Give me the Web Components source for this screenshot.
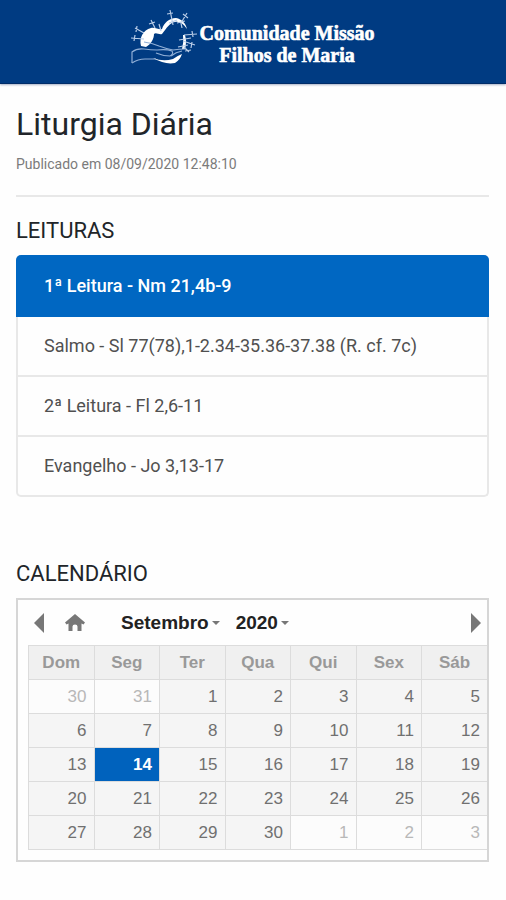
<!DOCTYPE html>
<html lang="pt-BR">
<head>
<meta charset="utf-8">
<meta name="viewport" content="width=device-width, initial-scale=1">
<title>Liturgia Diária</title>
<style>
  body {
    margin: 0;
    background: #fefefe;
    color: #212529;
    font-family: Roboto, "Liberation Sans", sans-serif;
  }
  main {
    padding: 20px 17px 0 16px;
  }
</style>
</head>
<body>
  <site-header>
    <span>Comunidade Missão</span>
    <span>Filhos de Maria</span>
  </site-header>

  <main>
    <page-title>
      Liturgia Diária
      <span slot="date">Publicado em 08/09/2020 12:48:10</span>
    </page-title>

    <page-section heading="LEITURAS">
      <reading-list>
        <reading-item active>1ª Leitura - Nm 21,4b-9</reading-item>
        <reading-item>Salmo - Sl 77(78),1-2.34-35.36-37.38 (R. cf. 7c)</reading-item>
        <reading-item>2ª Leitura - Fl 2,6-11</reading-item>
        <reading-item>Evangelho - Jo 3,13-17</reading-item>
      </reading-list>
    </page-section>

    <page-section heading="CALENDÁRIO">
      <month-calendar year="2020" month="9" day="14"></month-calendar>
    </page-section>
  </main>

<script>
class SiteHeader extends HTMLElement {
  constructor() {
    super();
    this.attachShadow({ mode: 'open' });
    this.shadowRoot.innerHTML = `
      <style>
        :host {
          display: block;
          background: #003b82;
          border-bottom: 1px solid #002c68;
          box-shadow: 0 1px 2px rgba(0, 30, 90, 0.35);
        }
        a {
          display: flex;
          align-items: center;
          justify-content: center;
          gap: 2px;
          height: 83px;
          padding-bottom: 10px;
          box-sizing: border-box;
          color: #fff;
          text-decoration: none;
        }
        .name {
          display: flex;
          flex-direction: column;
          align-items: center;
          padding-top: 14px;
          font: bold 20px/22px "Liberation Serif", serif;
          -webkit-text-stroke: 0.6px #fff;
        }
      </style>
      <a href="#">
        <svg width="66" height="56" viewBox="0 0 66 56" fill="none" stroke="#fff" aria-hidden="true">
          <!-- heart -->
          <path d="M10 37C8 29 12 21 20 19C24 18 28 21 31 20C33 14 38 9 45 9C51 10 55 15 56 20C52 14 48 12 44 13C38 14 36 19 31 25C28 26 25 23 23 25C23 30 20 35 15 38Z" fill="#fff" stroke="none"/>
          <path d="M54 26Q56 33 54 40L51 40Q53 33 52 26Z" fill="#fff" stroke="none"/>
          <!-- thorns -->
          <g stroke="#b9cde8" stroke-width="1.200">
            <path d="M13 24L4 19M6 17L5 23M13 30L0 29M4 26L3 32M24 19L20 11M18 15L24 13M30 22L28 15M42 16L39 1M36 5L42 4M38 14L46 11M51 19L50 14L56 4M52 5L57 9M46 14L54 12"/>
            <path d="M53 26L66 25M61 22L62 28M52 32L64 36M61 33L60 39M53 38L58 43M54 42L60 41M48 31L60 29M47 38L57 36"/>
          </g>
          <!-- hand -->
          <g stroke="#8faed6" stroke-width="1.200">
            <path d="M1 54V43Q6 39 13 40Q20 41 26 41Q36 40 41 42Q43 45 39 47Q32 47 25 44"/>
            <path d="M1 54Q7 50 14 50Q20 50 25 50M13 33Q21 34 28 37Q36 40 42 41Q48 40 55 40M40 47Q45 43 51 42"/>
          </g>
          <path d="M22 49Q32 53 42 50Q46 47 51 45Q49 51 44 54Q34 56 22 49Z" fill="#fff" stroke="none"/>
        </svg>
        <span class="name"><slot></slot></span>
      </a>
    `;
  }
}

class PageTitle extends HTMLElement {
  constructor() {
    super();
    this.attachShadow({ mode: 'open' });
    this.shadowRoot.innerHTML = `
      <style>
        :host {
          display: block;
          padding-bottom: 21px;
          border-bottom: 2px solid #e8e8e8;
        }
        h1 {
          margin: 0 0 10px;
          font-size: 32px;
          line-height: 40px;
          font-weight: 400;
        }
        p {
          margin: 0;
          font-size: 14px;
          line-height: 20px;
          color: #7b7b7b;
        }
      </style>
      <h1><slot></slot></h1>
      <p><slot name="date"></slot></p>
    `;
  }
}

class PageSection extends HTMLElement {
  constructor() {
    super();
    this.attachShadow({ mode: 'open' });
  }

  connectedCallback() {
    this.shadowRoot.innerHTML = `
      <style>
        :host {
          display: block;
          padding-top: 20px;
        }
        :host(:not(:last-child)) {
          margin-bottom: 43px;
        }
        h2 {
          margin: 0 0 10px;
          font-size: 22px;
          line-height: 28px;
          font-weight: 400;
        }
      </style>
      <h2>${this.getAttribute('heading')}</h2>
      <slot></slot>
    `;
  }
}

class ReadingList extends HTMLElement {
  constructor() {
    super();
    this.attachShadow({ mode: 'open' });
    this.shadowRoot.innerHTML = `
      <style>
        :host {
          display: block;
          border: 2px solid #e8e8e8;
          border-top: 0;
          border-radius: 5px;
        }
      </style>
      <slot></slot>
    `;
  }
}

class ReadingItem extends HTMLElement {
  constructor() {
    super();
    this.attachShadow({ mode: 'open' });
    this.shadowRoot.innerHTML = `
      <style>
        :host {
          display: block;
        }
        :host(:not([active]):not(:last-child)) {
          border-bottom: 2px solid #e8e8e8;
        }
        a {
          display: block;
          padding: 17px 26px;
          font-size: 18px;
          line-height: 24px;
          color: #505050;
          text-decoration: none;
        }
        :host([active]) a {
          margin: 0 -2px;
          padding: 19px 28px;
          border-radius: 5px 5px 0 0;
          background: #0067c2;
          color: #fff;
          font-weight: 500;
        }
      </style>
      <a href="#"><slot></slot></a>
    `;
  }
}

const MONTHS = ['Janeiro', 'Fevereiro', 'Março', 'Abril', 'Maio', 'Junho', 'Julho',
  'Agosto', 'Setembro', 'Outubro', 'Novembro', 'Dezembro'];
const WEEKDAYS = ['Dom', 'Seg', 'Ter', 'Qua', 'Qui', 'Sex', 'Sáb'];

class MonthCalendar extends HTMLElement {
  constructor() {
    super();
    this.attachShadow({ mode: 'open' });
  }

  connectedCallback() {
    this.year = Number(this.getAttribute('year'));
    this.month = Number(this.getAttribute('month')) - 1;
    this.day = Number(this.getAttribute('day'));
    this.home = [this.year, this.month];
    this.render();
  }

  show(year, month) {
    const date = new Date(year, month, 1);
    this.year = date.getFullYear();
    this.month = date.getMonth();
    this.render();
  }

  renderWeeks() {
    const offset = new Date(this.year, this.month, 1).getDay();
    const total = new Date(this.year, this.month + 1, 0).getDate();
    const weeks = Math.ceil((offset + total) / 7);
    let rows = '';
    for (let w = 0; w < weeks; w++) {
      rows += '<tr>';
      for (let d = 0; d < 7; d++) {
        const date = new Date(this.year, this.month, w * 7 + d - offset + 1);
        let state = '';
        if (date.getMonth() !== this.month) {
          state = 'other';
        } else if (date.getDate() === this.day) {
          state = 'selected';
        }
        rows += `<td class="${state}"><button type="button">${date.getDate()}</button></td>`;
      }
      rows += '</tr>';
    }
    return rows;
  }

  render() {
    const months = MONTHS.map((name, i) =>
      `<option value="${i}" ${i === this.month ? 'selected' : ''}>${name}</option>`).join('');
    let years = '';
    for (let y = this.year - 2; y <= this.year + 2; y++) {
      years += `<option ${y === this.year ? 'selected' : ''}>${y}</option>`;
    }

    this.shadowRoot.innerHTML = `
      <style>
        :host {
          display: block;
          padding: 0 0 10px 10px;
          border: 2px solid #d6d6d6;
          font-family: "Liberation Sans", Arial, sans-serif;
        }
        button, select {
          margin: 0;
          padding: 0;
          border: 0;
          background: none;
          font: inherit;
          color: inherit;
          cursor: pointer;
        }
        svg {
          display: block;
          fill: #777;
        }
        nav {
          display: flex;
          align-items: center;
          height: 45px;
          padding: 0 6px;
        }
        .home {
          margin: 0 36px 0 21px;
        }
        label {
          display: flex;
          align-items: center;
          gap: 3px;
          margin-right: 16px;
        }
        select {
          appearance: none;
          field-sizing: content;
          font-size: 19px;
          line-height: 24px;
          font-weight: bold;
          color: #222;
        }
        .next {
          margin-left: auto;
        }
        table {
          width: 100%;
          table-layout: fixed;
          border-collapse: collapse;
          font-size: 17px;
          line-height: 20px;
          color: #707070;
        }
        th, td {
          height: 33px;
          padding: 0;
          border: 1px solid #dcdcdc;
          background: #f5f5f5;
        }
        th:last-child, td:last-child {
          border-right: 0;
        }
        th {
          background: #f0f0f0;
          color: #999;
        }
        td button {
          display: block;
          width: 100%;
          padding: 6px 7px;
          text-align: right;
        }
        td.other {
          background: #fcfcfc;
          color: #b8b8b8;
        }
        td.selected {
          background: #0062bd;
          color: #fff;
          font-weight: bold;
        }
      </style>
      <nav>
        <button class="prev" type="button" aria-label="Mês anterior">
          <svg width="10" height="20" viewBox="0 0 10 20"><path d="M10 0V20L0 10Z"/></svg>
        </button>
        <button class="home" type="button" aria-label="Mês atual">
          <svg width="20" height="17" viewBox="0 0 20 17"><path d="M10 0L20 8.500L18.500 10.500L16.500 9.500V17H12.500V12.500Q12.500 10.500 10 10.500Q7.500 10.500 7.500 12.500V17H3.500V9.500L1.500 10.500L0 8.500Z"/></svg>
        </button>
        <label>
          <select class="month" aria-label="Mês">${months}</select>
          <svg width="8" height="4" viewBox="0 0 8 4"><path d="M0 0H8L4 4Z"/></svg>
        </label>
        <label>
          <select class="year" aria-label="Ano">${years}</select>
          <svg width="8" height="4" viewBox="0 0 8 4"><path d="M0 0H8L4 4Z"/></svg>
        </label>
        <button class="next" type="button" aria-label="Próximo mês">
          <svg width="10" height="20" viewBox="0 0 10 20"><path d="M0 0V20L10 10Z"/></svg>
        </button>
      </nav>
      <table>
        <thead>
          <tr>${WEEKDAYS.map((name) => `<th scope="col">${name}</th>`).join('')}</tr>
        </thead>
        <tbody>${this.renderWeeks()}</tbody>
      </table>
    `;

    const find = (selector) => this.shadowRoot.querySelector(selector);
    find('.prev').addEventListener('click', () => this.show(this.year, this.month - 1));
    find('.next').addEventListener('click', () => this.show(this.year, this.month + 1));
    find('.home').addEventListener('click', () => this.show(...this.home));
    find('.month').addEventListener('change', (e) => this.show(this.year, Number(e.target.value)));
    find('.year').addEventListener('change', (e) => this.show(Number(e.target.value), this.month));
    find('tbody').addEventListener('click', (e) => {
      const cell = e.target.closest('td');
      if (!cell || cell.classList.contains('other')) return;
      this.day = Number(cell.textContent);
      this.render();
    });
  }
}

customElements.define('site-header', SiteHeader);
customElements.define('page-title', PageTitle);
customElements.define('page-section', PageSection);
customElements.define('reading-list', ReadingList);
customElements.define('reading-item', ReadingItem);
customElements.define('month-calendar', MonthCalendar);
</script>
</body>
</html>
